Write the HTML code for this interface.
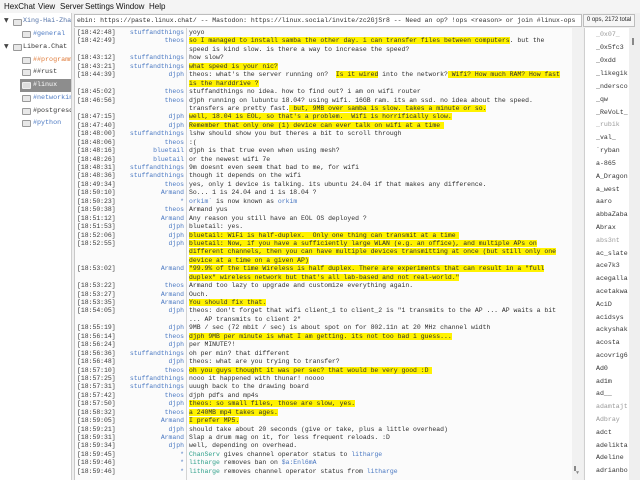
<!DOCTYPE html>
<html><head><meta charset="utf-8"><style>
*{margin:0;padding:0;box-sizing:border-box}
body{width:640px;height:480px;overflow:hidden;background:#efefef;font-family:"Liberation Mono",monospace;font-size:6.45px;color:#2e2e2e;position:relative}
.menu{position:absolute;top:0;left:0;width:640px;height:13px;background:#f4f4f4;font-family:"Liberation Sans",sans-serif;font-size:8px;color:#111}
.menu span{position:absolute;top:1.5px}
.left{position:absolute;left:0;top:13px;width:72px;height:467px;background:#fff;border-right:1px solid #cfcfcf;overflow:hidden}
.ti{position:absolute;height:12px;line-height:12px;white-space:pre;font-size:6.7px}
.ic{position:absolute;width:9px;height:7px;border:1px solid #999;background:#e8e8e8;top:2.5px;border-radius:1px}
.tri{position:absolute;left:4px;font-size:6px;color:#444;font-family:"DejaVu Sans",sans-serif}
.topic{position:absolute;left:74px;top:14px;width:508px;height:13px;background:#fff;border:1px solid #bdbdbd;line-height:11px;white-space:pre;overflow:hidden;padding-left:2px}
.chat{position:absolute;left:74px;top:28px;width:498px;height:452px;background:#fbfbfb;border-left:1px solid #c8c8c8}
.sb{position:absolute;left:572px;top:28px;width:11px;height:452px;background:#f1f1f1}
.sep{position:absolute;left:186px;top:28px;width:1px;height:452px;background:#d4d4d4}
.lines{position:absolute;left:0;top:29px;width:640px}
.r{position:relative;height:8.44px;line-height:8.44px;white-space:pre}
.t{position:absolute;left:77px;color:#3a3a3a}
.n{position:absolute;right:456px;color:#4a78c2}
.m{position:absolute;left:189px}
.h{background:#fff200}
.b{color:#4a78c2}.g{color:#2fa08a}
.ulh{position:absolute;left:583px;top:14px;width:52px;height:13px;border:1px solid #bdbdbd;background:#f6f6f6;font-family:"Liberation Sans",sans-serif;font-size:6px;line-height:11px;text-align:center;color:#222;white-space:nowrap;overflow:hidden}
.ul{position:absolute;left:584px;top:28px;width:45px;height:452px;background:#fff;border-left:1px solid #cfcfcf}
.u{position:absolute;left:596px;white-space:pre;line-height:8px;color:#333;font-size:6.6px}
.gr{color:#9a9a9a}
</style></head><body>
<div class="menu"><span style="left:4px">HexChat</span><span style="left:38px">View</span><span style="left:60px">Server</span><span style="left:85px">Settings</span><span style="left:116px">Window</span><span style="left:149px">Help</span></div>
<div class="left">
<span class="tri" style="top:4px">▼</span><div class="ic" style="left:13px;top:5.5px"></div><div class="ti" style="left:23px;top:2px;color:#5473a8">Xing-Hai-Zhao</div>
<div class="ic" style="left:22px;top:18px"></div><div class="ti" style="left:33px;top:15px;color:#4a78c2">#general</div>
<span class="tri" style="top:30px">▼</span><div class="ic" style="left:13px;top:31px"></div><div class="ti" style="left:23px;top:28px;color:#333">Libera.Chat</div>
<div class="ic" style="left:22px;top:44px"></div><div class="ti" style="left:33px;top:41px;color:#e07b39">##programming</div>
<div class="ic" style="left:22px;top:56px"></div><div class="ti" style="left:33px;top:53px;color:#333">##rust</div>
<div style="position:absolute;left:20px;top:66px;width:52px;height:12.5px;background:#8d8d8d"></div>
<div class="ic" style="left:22px;top:69px;background:#ddd;border-color:#eee"></div><div class="ti" style="left:33px;top:66px;color:#fff">#linux</div>
<div class="ic" style="left:22px;top:82px"></div><div class="ti" style="left:33px;top:79px;color:#4a78c2">#networking</div>
<div class="ic" style="left:22px;top:95px"></div><div class="ti" style="left:33px;top:92px;color:#333">#postgresql</div>
<div class="ic" style="left:22px;top:107px"></div><div class="ti" style="left:33px;top:104px;color:#4a78c2">#python</div>
</div>
<div class="topic">ebin: https://paste.linux.chat/ -- Mastodon: https://linux.social/invite/zc2GjSr8 -- Need an op? !ops &lt;reason&gt; or join #linux-ops</div>
<div class="chat"></div><div class="sb"></div><div class="sep"></div>
<div style="position:absolute;left:576px;top:470px;font-size:5px;color:#888">▼</div>
<div class="lines">
<div class="r"><span class="t">[18:42:48]</span><span class="n">stuffandthings</span><span class="m">yoyo</span></div>
<div class="r"><span class="t">[18:42:49]</span><span class="n">theos</span><span class="m"><span class="h">so I managed to install samba the other day. i can transfer files between computers</span>. but the</span></div>
<div class="r"><span class="m">speed is kind slow. is there a way to increase the speed?</span></div>
<div class="r"><span class="t">[18:43:12]</span><span class="n">stuffandthings</span><span class="m">how slow?</span></div>
<div class="r"><span class="t">[18:43:21]</span><span class="n">stuffandthings</span><span class="m"><span class="h">what speed is your nic?</span></span></div>
<div class="r"><span class="t">[18:44:39]</span><span class="n">djph</span><span class="m">theos: what's the server running on?  <span class="h">Is it wired</span> into the network?<span class="h"> Wifi? How much RAM? How fast</span></span></div>
<div class="r"><span class="m"><span class="h">is the harddrive ?</span></span></div>
<div class="r"><span class="t">[18:45:02]</span><span class="n">theos</span><span class="m">stuffandthings no idea. how to find out? i am on wifi router</span></div>
<div class="r"><span class="t">[18:46:56]</span><span class="n">theos</span><span class="m">djph running on lubuntu 18.04? using wifi. 16GB ram. its an ssd. no idea about the speed.</span></div>
<div class="r"><span class="m">transfers are pretty fast.<span class="h"> but, 9MB over samba is slow. takes a minute or so.</span></span></div>
<div class="r"><span class="t">[18:47:15]</span><span class="n">djph</span><span class="m"><span class="h">well, 18.04 is EOL, so that's a problem.  Wifi is horrifically slow.</span></span></div>
<div class="r"><span class="t">[18:47:40]</span><span class="n">djph</span><span class="m"><span class="h">Remember that only one (1) device can ever talk on wifi at a time </span></span></div>
<div class="r"><span class="t">[18:48:00]</span><span class="n">stuffandthings</span><span class="m">lshw should show you but theres a bit to scroll through</span></div>
<div class="r"><span class="t">[18:48:06]</span><span class="n">theos</span><span class="m">:(</span></div>
<div class="r"><span class="t">[18:48:16]</span><span class="n">bluetail</span><span class="m">djph is that true even when using mesh?</span></div>
<div class="r"><span class="t">[18:48:26]</span><span class="n">bluetail</span><span class="m">or the newest wifi 7e</span></div>
<div class="r"><span class="t">[18:48:31]</span><span class="n">stuffandthings</span><span class="m">9m doesnt even seem that bad to me, for wifi</span></div>
<div class="r"><span class="t">[18:48:36]</span><span class="n">stuffandthings</span><span class="m">though it depends on the wifi</span></div>
<div class="r"><span class="t">[18:49:34]</span><span class="n">theos</span><span class="m">yes, only 1 device is talking. its ubuntu 24.04 if that makes any difference.</span></div>
<div class="r"><span class="t">[18:50:10]</span><span class="n">Armand</span><span class="m">So... 1 is 24.04 and 1 is 18.04 ?</span></div>
<div class="r"><span class="t">[18:50:23]</span><span class="n">*</span><span class="m"><span class="b">orkim`</span> is now known as <span class="b">orkim</span></span></div>
<div class="r"><span class="t">[18:50:38]</span><span class="n">theos</span><span class="m">Armand yus</span></div>
<div class="r"><span class="t">[18:51:12]</span><span class="n">Armand</span><span class="m">Any reason you still have an EOL OS deployed ?</span></div>
<div class="r"><span class="t">[18:51:53]</span><span class="n">djph</span><span class="m">bluetail: yes.</span></div>
<div class="r"><span class="t">[18:52:06]</span><span class="n">djph</span><span class="m"><span class="h">bluetail: WiFi is half-duplex.  Only one thing can transmit at a time </span></span></div>
<div class="r"><span class="t">[18:52:55]</span><span class="n">djph</span><span class="m"><span class="h">bluetail: Now, if you have a sufficiently large WLAN (e.g. an office), and multiple APs on</span></span></div>
<div class="r"><span class="m"><span class="h">different channels, then you can have multiple devices transmitting at once (but still only one</span></span></div>
<div class="r"><span class="m"><span class="h">device at a time on a given AP)</span></span></div>
<div class="r"><span class="t">[18:53:02]</span><span class="n">Armand</span><span class="m"><span class="h">"99.9% of the time Wireless is half duplex. There are experiments that can result in a "full</span></span></div>
<div class="r"><span class="m"><span class="h">duplex" wireless network but that's all lab-based and not real-world."</span></span></div>
<div class="r"><span class="t">[18:53:22]</span><span class="n">theos</span><span class="m">Armand too lazy to upgrade and customize everything again.</span></div>
<div class="r"><span class="t">[18:53:27]</span><span class="n">Armand</span><span class="m">Ouch.</span></div>
<div class="r"><span class="t">[18:53:35]</span><span class="n">Armand</span><span class="m"><span class="h">You should fix that.</span></span></div>
<div class="r"><span class="t">[18:54:05]</span><span class="n">djph</span><span class="m">theos: don't forget that wifi client_1 to client_2 is "1 transmits to the AP ... AP waits a bit</span></div>
<div class="r"><span class="m">... AP transmits to client 2"</span></div>
<div class="r"><span class="t">[18:55:19]</span><span class="n">djph</span><span class="m">9MB / sec (72 mbit / sec) is about spot on for 802.11n at 20 MHz channel width</span></div>
<div class="r"><span class="t">[18:56:14]</span><span class="n">theos</span><span class="m"><span class="h">djph 9MB per minute is what I am getting. its not too bad i guess...</span></span></div>
<div class="r"><span class="t">[18:56:24]</span><span class="n">djph</span><span class="m">per MINUTE?!</span></div>
<div class="r"><span class="t">[18:56:36]</span><span class="n">stuffandthings</span><span class="m">oh per min? that different</span></div>
<div class="r"><span class="t">[18:56:48]</span><span class="n">djph</span><span class="m">theos: what are you trying to transfer?</span></div>
<div class="r"><span class="t">[18:57:10]</span><span class="n">theos</span><span class="m"><span class="h">oh you guys thought it was per sec? that would be very good :D </span></span></div>
<div class="r"><span class="t">[18:57:25]</span><span class="n">stuffandthings</span><span class="m">nooo it happened with thunar! noooo</span></div>
<div class="r"><span class="t">[18:57:31]</span><span class="n">stuffandthings</span><span class="m">uuugh back to the drawing board</span></div>
<div class="r"><span class="t">[18:57:42]</span><span class="n">theos</span><span class="m">djph pdfs and mp4s</span></div>
<div class="r"><span class="t">[18:57:50]</span><span class="n">djph</span><span class="m"><span class="h">theos: so small files, those are slow, yes.</span></span></div>
<div class="r"><span class="t">[18:58:32]</span><span class="n">theos</span><span class="m"><span class="h">a 240MB mp4 takes ages.</span></span></div>
<div class="r"><span class="t">[18:59:05]</span><span class="n">Armand</span><span class="m"><span class="h">I prefer MP5.</span></span></div>
<div class="r"><span class="t">[18:59:21]</span><span class="n">djph</span><span class="m">should take about 20 seconds (give or take, plus a little overhead)</span></div>
<div class="r"><span class="t">[18:59:31]</span><span class="n">Armand</span><span class="m">Slap a drum mag on it, for less frequent reloads. :D</span></div>
<div class="r"><span class="t">[18:59:34]</span><span class="n">djph</span><span class="m">well, depending on overhead.</span></div>
<div class="r"><span class="t">[18:59:45]</span><span class="n">*</span><span class="m"><span class="g">ChanServ</span> gives channel operator status to <span class="b">litharge</span></span></div>
<div class="r"><span class="t">[18:59:46]</span><span class="n">*</span><span class="m"><span class="g">litharge</span> removes ban on <span class="b">$a:Enl6mA</span></span></div>
<div class="r"><span class="t">[18:59:46]</span><span class="n">*</span><span class="m"><span class="g">litharge</span> removes channel operator status from <span class="b">litharge</span></span></div>
</div>
<div class="ulh">0 ops, 2172 total</div>
<div class="ul"></div>
<div style="position:absolute;left:629px;top:28px;width:11px;height:452px;background:#efefef"></div>
<div style="position:absolute;left:632px;top:38px;width:2px;height:7px;background:#888"></div>
<div style="position:absolute;left:574px;top:466px;width:2px;height:5px;background:#888"></div>
<div class="u gr" style="top:31px">_0x07_</div>
<div class="u" style="top:44px">_0x5fc3</div>
<div class="u" style="top:57px">_0xdd</div>
<div class="u" style="top:70px">_likegik</div>
<div class="u" style="top:83px">_ndersco</div>
<div class="u" style="top:96px">_qw</div>
<div class="u" style="top:109px">_ReVoLt_</div>
<div class="u gr" style="top:121px">_rubik</div>
<div class="u" style="top:134px">_val_</div>
<div class="u" style="top:147px">`ryban</div>
<div class="u" style="top:160px">a-865</div>
<div class="u" style="top:173px">A_Dragon</div>
<div class="u" style="top:186px">a_west</div>
<div class="u" style="top:198px">aaro</div>
<div class="u" style="top:211px">abbaZaba</div>
<div class="u" style="top:224px">Abrax</div>
<div class="u gr" style="top:237px">abs3nt</div>
<div class="u" style="top:250px">ac_slate</div>
<div class="u" style="top:262px">ace7k3</div>
<div class="u" style="top:275px">acegalla</div>
<div class="u" style="top:288px">acetakwa</div>
<div class="u" style="top:301px">AciD</div>
<div class="u" style="top:314px">acidsys</div>
<div class="u" style="top:326px">ackyshak</div>
<div class="u" style="top:339px">acosta</div>
<div class="u" style="top:352px">acovrig6</div>
<div class="u" style="top:365px">Ad0</div>
<div class="u" style="top:378px">ad1m</div>
<div class="u" style="top:390px">ad__</div>
<div class="u gr" style="top:403px">adamtajt</div>
<div class="u gr" style="top:416px">Adbray</div>
<div class="u" style="top:429px">adct</div>
<div class="u" style="top:442px">adelikta</div>
<div class="u" style="top:454px">Adeline</div>
<div class="u" style="top:467px">adrianbo</div>
</body></html>
